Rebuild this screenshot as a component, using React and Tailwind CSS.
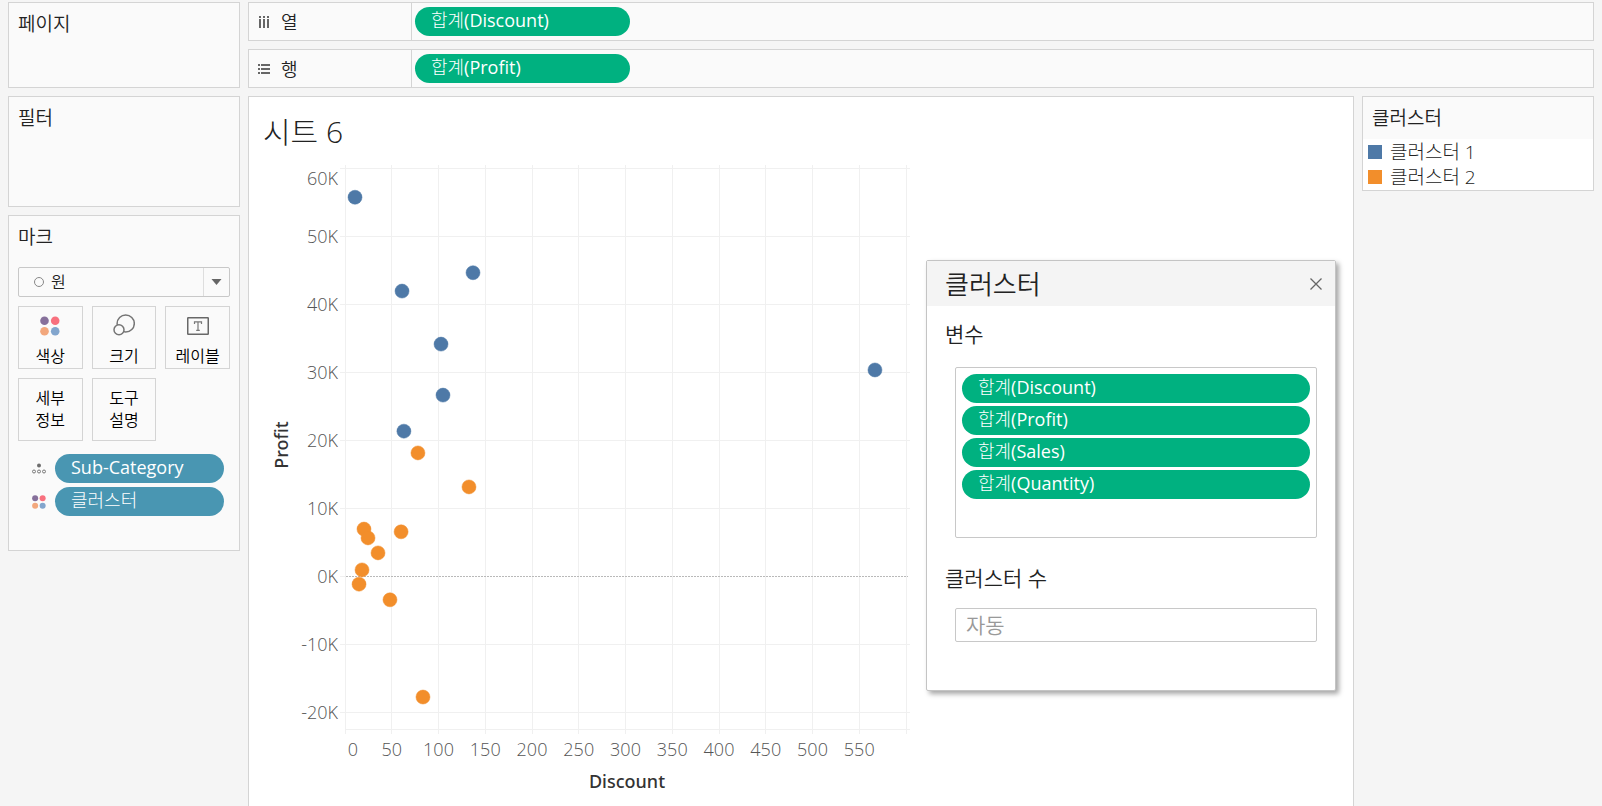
const POINT_RADIUS = 7;

const blue = '#4e79a7';
const orange = '#f28e2b';

// chart coordinates: one tick on x is 50, one tick on y is 10K
const xTicks = [0, 50, 100, 150, 200, 250, 300, 350, 400, 450, 500, 550];
const yTicks = [60, 50, 40, 30, 20, 10, 0, -10, -20];

const toX = (value) => 86 + (value / 50) * 46.75;
const toY = (value) => 10 + ((60 - value) / 10) * 68;

const points = [
  { x: 10.7, y: 55.7, color: blue },
  { x: 61, y: 41.9, color: blue },
  { x: 136.9, y: 44.6, color: blue },
  { x: 102.7, y: 34.1, color: blue },
  { x: 104.8, y: 26.6, color: blue },
  { x: 566.8, y: 30.3, color: blue },
  { x: 63, y: 21.3, color: blue },
  { x: 78, y: 18.1, color: orange },
  { x: 132.6, y: 13.1, color: orange },
  { x: 20.3, y: 6.9, color: orange },
  { x: 24.6, y: 5.6, color: orange },
  { x: 60, y: 6.5, color: orange },
  { x: 35.3, y: 3.4, color: orange },
  { x: 18.2, y: 0.9, color: orange },
  { x: 15, y: -1.2, color: orange },
  { x: 48.1, y: -3.5, color: orange },
  { x: 83.4, y: -17.8, color: orange },
];

const legend = [
  { label: '클러스터 1', swatch: 'bg-[#4e79a7]' },
  { label: '클러스터 2', swatch: 'bg-[#f28e2b]' },
];

const variables = ['합계(Discount)', '합계(Profit)', '합계(Sales)', '합계(Quantity)'];

function ColorDots({ size }) {
  return (
    <svg width={size} height={size} viewBox="0 0 20 20" aria-hidden="true">
      <circle cx="4.5" cy="4.7" r="4.3" fill="#86709b" />
      <circle cx="15.2" cy="4.7" r="4.3" fill="#f8707e" />
      <circle cx="4.5" cy="15.3" r="4.3" fill="#f2a77c" />
      <circle cx="15.2" cy="15.3" r="4.3" fill="#82a5cd" />
    </svg>
  );
}

function SizeIcon() {
  return (
    <svg width="22" height="22" viewBox="0 0 22 22" fill="none" stroke="#757575" strokeWidth="1.5" aria-hidden="true">
      <circle cx="12.7" cy="9.5" r="8.6" />
      <circle cx="6" cy="15.7" r="5" fill="#fafafa" />
    </svg>
  );
}

function LabelIcon() {
  return (
    <svg width="22" height="20" viewBox="0 0 22 20" aria-hidden="true">
      <rect x="0.75" y="1.75" width="20.5" height="16.5" rx="0.5" fill="none" stroke="#686868" strokeWidth="1.5" />
      <path d="M7.5 8V5.8h7V8M11 5.8v8.4M9.2 14.3h3.6" fill="none" stroke="#787878" strokeWidth="1.2" />
    </svg>
  );
}

function DetailIcon() {
  return (
    <svg width="14" height="11" viewBox="0 0 14 11" aria-hidden="true">
      <circle cx="7" cy="2.4" r="2" fill="#6d6d6d" />
      <g fill="none" stroke="#777" strokeWidth="1">
        <circle cx="2" cy="8.5" r="1.5" />
        <circle cx="7" cy="8.5" r="1.5" />
        <circle cx="12" cy="8.5" r="1.5" />
      </g>
    </svg>
  );
}

function ColumnsIcon() {
  return (
    <svg width="12" height="12" viewBox="0 0 12 12" fill="#666" aria-hidden="true">
      <path d="M1 0h2v2H1zM5 0h2v2H5zM9 0h2v2H9zM1 3h2v9H1zM5 3h2v9H5zM9 3h2v9H9z" />
    </svg>
  );
}

function RowsIcon() {
  return (
    <svg width="12" height="12" viewBox="0 0 12 12" fill="#666" aria-hidden="true">
      <path d="M0 1h2v2H0zM0 5h2v2H0zM0 9h2v2H0zM3 1h9v2H3zM3 5h9v2H3zM3 9h9v2H3z" />
    </svg>
  );
}

function Panel({ title, className, children }) {
  return (
    <section className={`border border-[#d4d4d4] bg-[#fafafa] ${className}`}>
      <h2 className="px-[9px] pt-[7px] pb-px text-[19px] leading-7">{title}</h2>
      {children}
    </section>
  );
}

function Pill({ children, className }) {
  return (
    <button type="button" className={`block h-[29px] truncate rounded-full px-4 pb-[3px] text-left font-['Open_Sans','Noto_Sans_CJK_KR_Light','Noto_Sans_CJK_KR',sans-serif] text-lg leading-[26px] font-normal text-white ${className}`}>
      {children}
    </button>
  );
}

function Shelf({ icon, title, field }) {
  return (
    <section className="flex h-[39px] items-center border border-[#d4d4d4] bg-[#fafafa]">
      <h2 className="flex h-full w-[163px] items-center gap-[11px] border-r border-[#d4d4d4] pl-[9px] text-lg">
        {icon}
        {title}
      </h2>
      <Pill className="ml-[3px] w-[215px] bg-[#00b180]">{field}</Pill>
    </section>
  );
}

function MarkButton({ icon, children }) {
  return (
    <button type="button" className="flex h-[63px] flex-col items-center justify-center border border-[#d4d4d4] text-base leading-[22px] text-black">
      {icon && <span className="flex h-[27px] items-end">{icon}</span>}
      <span className={icon ? 'mt-[9px]' : 'w-9 pb-[2px]'}>{children}</span>
    </button>
  );
}

function ScatterPlot() {
  return (
    <svg width="652" height="640" viewBox="0 0 652 640" className="block" role="img" aria-label="Discount / Profit">
      <g stroke="#f0f0f0" shapeRendering="crispEdges">
        {[...xTicks, 600].map((tick) => (
          <line key={tick} x1={tick === 600 ? 647 : toX(tick)} x2={tick === 600 ? 647 : toX(tick)} y1="7" y2="576" />
        ))}
        {yTicks.filter((tick) => tick !== 0).map((tick) => (
          <line key={tick} x1="81" x2="651" y1={toY(tick)} y2={toY(tick)} />
        ))}
        <line x1="81" x2="86" y1={toY(0)} y2={toY(0)} />
        <line x1="86" x2="651" y1="571" y2="571" />
      </g>
      <line x1="87" x2="649" y1={toY(0) + 0.5} y2={toY(0) + 0.5} stroke="#b9b9b9" strokeDasharray="2 1" />

      <g fill="#555" fontSize="18" fontWeight="300">
        {yTicks.map((tick) => (
          <text key={tick} x="79" y={tick === 60 ? 27 : toY(tick) + 7} textAnchor="end">{tick}K</text>
        ))}
        {xTicks.map((tick) => (
          <text key={tick} x={tick === 0 ? 94 : toX(tick)} y="598" textAnchor="middle">{tick}</text>
        ))}
      </g>

      <g fill="#333" fontSize="18" fontWeight="500" textAnchor="middle" className="font-['Noto_Sans','Open_Sans',sans-serif]">
        <text x="368" y="630">Discount</text>
        <text transform="translate(29 287) rotate(-90)">Profit</text>
      </g>

      {points.map((point, i) => (
        <circle key={i} cx={toX(point.x)} cy={toY(point.y)} r={POINT_RADIUS} fill={point.color} stroke={point.color} strokeOpacity="0.5" />
      ))}
    </svg>
  );
}

function ClusterDialog() {
  return (
    <div role="dialog" aria-labelledby="cluster-title" className="absolute top-[163px] left-[677px] w-[410px] rounded-xs border border-[#c4c4c4] bg-white pb-12 shadow-[3px_3px_5px_rgba(0,0,0,0.35)]">
      <header className="flex h-[45px] items-center justify-between bg-[#f4f4f4] pr-3 pl-[18px]">
        <h2 id="cluster-title" className="text-[26px] leading-9">클러스터</h2>
        <button type="button" aria-label="닫기" className="p-px">
          <svg width="12" height="12" viewBox="0 0 12 12" stroke="#666" strokeWidth="1.3">
            <path d="M0.5 0.5l11 11M11.5 0.5l-11 11" />
          </svg>
        </button>
      </header>
      <div className="px-[18px]">
        <h3 className="pt-3 text-[21px] leading-8">변수</h3>
        <div className="mt-[17px] ml-[10px] flex h-[171px] flex-col gap-[3px] rounded-xs border border-[#c8c8c8] px-[6px] pt-[6px]">
          {variables.map((name) => (
            <Pill key={name} className="w-full shrink-0 bg-[#00b180]">{name}</Pill>
          ))}
        </div>
        <label htmlFor="cluster-count" className="mt-6 block text-[21px] leading-8">클러스터 수</label>
        <div className="mt-[14px] ml-[10px]">
          <input id="cluster-count" type="text" placeholder="자동" className="block h-[34px] w-full rounded-xs border border-[#c8c8c8] px-[10px] text-[21px] placeholder:text-[#999]" />
        </div>
      </div>
    </div>
  );
}

export default function App() {
  return (
    <div className="flex min-h-screen gap-2 bg-[#f5f5f5] px-2 pt-[2px] font-['Open_Sans','Noto_Sans_CJK_KR',sans-serif] font-[350] text-[#222]">
      <aside className="flex w-[232px] shrink-0 flex-col gap-2">
        <Panel title="페이지" className="h-[86px]" />
        <Panel title="필터" className="h-[111px]" />
        <Panel title="마크" className="h-[336px]">
          <div className="px-[9px] pt-[15px]">
            <div className="relative">
              <select aria-label="마크 유형" className="block h-[30px] w-full appearance-none rounded-xs border border-[#c8c8c8] pl-8 text-base leading-5">
                <option>원</option>
              </select>
              <span className="pointer-events-none absolute top-[10px] left-4 h-[10px] w-[10px] rounded-full border border-[#888]" />
              <span className="pointer-events-none absolute top-px right-px bottom-px flex w-[26px] items-center justify-center border-l border-[#dedede]">
                <svg width="11" height="6" viewBox="0 0 11 6" fill="#666" aria-hidden="true">
                  <path d="M0.5 0h10l-5 6z" />
                </svg>
              </span>
            </div>
            <div className="mt-[9px] grid grid-cols-3 gap-[9px]">
              <MarkButton icon={<ColorDots size={20} />}>색상</MarkButton>
              <MarkButton icon={<SizeIcon />}>크기</MarkButton>
              <MarkButton icon={<LabelIcon />}>레이블</MarkButton>
              <MarkButton>세부 정보</MarkButton>
              <MarkButton>도구 설명</MarkButton>
            </div>
            <ul className="mt-[13px] space-y-1 pr-[6px] pl-[14px]">
              <li className="flex items-center gap-[9px]">
                <DetailIcon />
                <Pill className="flex-1 bg-[#4996b2]">Sub-Category</Pill>
              </li>
              <li className="flex items-center gap-[9px]">
                <ColorDots size={14} />
                <Pill className="flex-1 bg-[#4996b2]">클러스터</Pill>
              </li>
            </ul>
          </div>
        </Panel>
      </aside>

      <div className="flex min-w-0 flex-1 flex-col gap-2">
        <Shelf icon={<ColumnsIcon />} title="열" field="합계(Discount)" />
        <Shelf icon={<RowsIcon />} title="행" field="합계(Profit)" />

        <div className="flex flex-1 gap-2">
          <main className="relative min-w-0 flex-1 border border-b-0 border-[#d4d4d4] bg-white">
            <h1 className="px-[14px] pt-[13px] text-[30px] leading-[44px] font-light">시트 6</h1>
            <div className="pt-1 pl-[10px]">
              <ScatterPlot />
            </div>
            <ClusterDialog />
          </main>

          <Panel title="클러스터" className="w-[232px] shrink-0 self-start">
            <ul className="mt-[6px] bg-white pb-px pl-[5px]">
              {legend.map((item) => (
                <li key={item.label} className="flex h-[25px] items-center gap-2 text-[19px] leading-[25px] font-light">
                  <span className={`h-[14px] w-[14px] ${item.swatch}`} />
                  <span className="pt-[2px]">{item.label}</span>
                </li>
              ))}
            </ul>
          </Panel>
        </div>
      </div>
    </div>
  );
}
